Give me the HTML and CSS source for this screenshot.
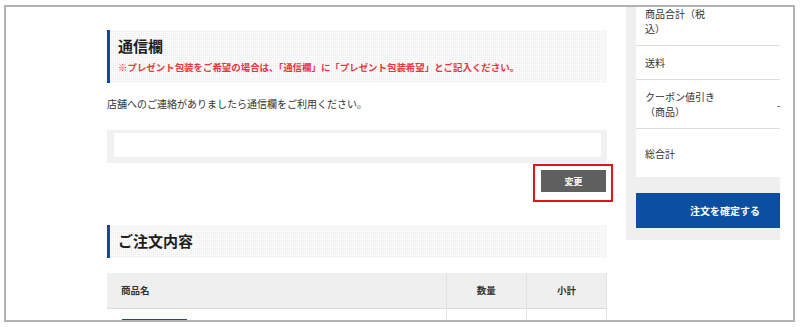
FILE: index.html
```html
<!DOCTYPE html>
<html lang="ja">
    <head>
        <meta charset="UTF-8" />
        <meta name="viewport" content="width=device-width, initial-scale=1.0" />
        <title>ご注文手続き</title>
        <link rel="stylesheet" href="styles.css">
    </head>
    <body>
        <div class="frame">
            <div class="layout">
                <main class="main">
                    <div class="section-head">
                        <h2>通信欄</h2>
                        <p class="notice">※プレゼント包装をご希望の場合は、「通信欄」に「プレゼント包装希望」とご記入ください。</p>
                    </div>
                    <p class="lead">店舗へのご連絡がありましたら通信欄をご利用ください。</p>
                    <textarea class="message" aria-label="通信欄"></textarea>
                    <div class="actions">
                        <span class="btn-wrap">
                            <button class="btn-change" type="button">変更</button>
                        </span>
                    </div>

                    <div class="section-head short">
                        <h2>ご注文内容</h2>
                    </div>
                    <table class="order-table">
                        <thead>
                            <tr>
                                <th class="col-name">商品名</th>
                                <th class="col-qty">数量</th>
                                <th class="col-sub">小計</th>
                            </tr>
                        </thead>
                        <tbody>
                            <tr>
                                <td class="col-name"><div class="item-thumb"></div></td>
                                <td class="col-qty"></td>
                                <td class="col-sub"></td>
                            </tr>
                        </tbody>
                    </table>
                </main>

                <aside class="side">
                    <div class="summary">
                        <div class="sum-row">
                            <div class="sum-label">商品合計（税込）</div>
                            <div class="sum-value"></div>
                        </div>
                        <div class="sum-row">
                            <div class="sum-label">送料</div>
                            <div class="sum-value"></div>
                        </div>
                        <div class="sum-row">
                            <div class="sum-label">クーポン値引き（商品）</div>
                            <div class="sum-value">-</div>
                        </div>
                        <div class="sum-row total">
                            <div class="sum-label">総合計</div>
                            <div class="sum-value"></div>
                        </div>
                    </div>
                    <button class="btn-confirm" type="button">注文を確定する</button>
                </aside>
            </div>
        </div>
    </body>
</html>
```

FILE: styles.css
```css
* {
    margin: 0;
    padding: 0;
    box-sizing: border-box;
}

body {
    font-family: "Noto Sans CJK JP", "Noto Sans", sans-serif;
    background: #fff;
    color: #333;
}

.frame {
    width: 791px;
    height: 317px;
    margin: 5px 0 0 4px;
    border: 2px solid #b2b2b2;
    overflow: hidden;
}

.layout {
    display: flex;
    align-items: flex-start;
    gap: 19px;
    padding-left: 101px;
}

.main {
    width: 500px;
    padding-top: 23px;
}

/* dotted heading band */
.section-head {
    border-left: 3px solid #0b4c9c;
    padding: 6px 10px 9px 8px;
    background-color: #ededed;
    background-image:
        linear-gradient(90deg, #fafafa 1px, transparent 1px),
        linear-gradient(#fafafa 1px, transparent 1px);
    background-size: 2px 2px;
}

.section-head h2 {
    font-size: 15px;
    line-height: 20px;
    font-weight: 700;
    color: #1e1e1e;
}

.section-head.short {
    margin-top: 33px;
    padding-bottom: 7px;
}

.notice {
    margin-top: 4px;
    font-size: 9.45px;
    line-height: 14px;
    font-weight: 700;
    color: #e8353c;
    white-space: nowrap;
}

.lead {
    margin-top: 14px;
    font-size: 10px;
    line-height: 14px;
    color: #333;
}

.message {
    display: block;
    width: 100%;
    height: 33px;
    margin-top: 19px;
    border-style: solid;
    border-color: #f1f1f1;
    border-width: 3px 6px 6px 7px;
    background: #fff;
    resize: none;
}

.actions {
    display: flex;
    justify-content: flex-end;
    margin-top: 7px;
    padding-right: 1px;
}

.btn-wrap {
    position: relative;
    display: block;
}

/* red annotation box */
.btn-wrap::after {
    content: "";
    position: absolute;
    top: -6px;
    right: -7px;
    bottom: -10px;
    left: -8px;
    border: 2px solid #e3141c;
}

.btn-change {
    display: block;
    width: 65px;
    height: 22px;
    border: none;
    background: #5f5f5f;
    color: #fff;
    font-family: inherit;
    font-size: 9px;
    font-weight: 700;
}

.order-table {
    width: 500px;
    margin-top: 15px;
    border-collapse: collapse;
    table-layout: fixed;
}

.order-table th {
    height: 35px;
    background: #efefef;
    border-bottom: 1px solid #dcdcdc;
    font-size: 9.5px;
    font-weight: 700;
    color: #333;
}

.order-table td {
    height: 40px;
    vertical-align: top;
}

.col-name {
    width: 339px;
    text-align: left;
    padding-left: 14px;
}

.order-table td.col-name {
    padding: 10px 0 0 15px;
}

.col-qty,
.col-sub {
    width: 80px;
    text-align: center;
    border-left: 1px solid #e2e2e2;
}

.col-sub {
    border-right: 1px solid #e2e2e2;
}

.item-thumb {
    width: 65px;
    height: 20px;
    border-top: 3px solid #0b4ea2;
}

/* order summary, clipped on the right like the capture */
.side {
    width: 154px;
    margin-top: -10px;
    padding: 0 0 12px 10px;
    background: #efefef;
    overflow: hidden;
}

.summary {
    width: 178px;
    background: #fff;
}

.sum-row {
    display: flex;
    align-items: center;
    padding: 9px 0 9px 9px;
    border-bottom: 1px solid #dcdcdc;
    font-size: 10px;
    line-height: 15px;
    color: #333;
}

.sum-row.total {
    padding: 17px 0 16px 9px;
    border-bottom: none;
}

.sum-label {
    width: 72px;
    flex-shrink: 0;
}

.sum-value {
    margin-left: 60px;
}

.btn-confirm {
    display: block;
    width: 178px;
    height: 35px;
    margin-top: 16px;
    border: none;
    background: #0b4ea2;
    color: #fff;
    font-family: inherit;
    font-size: 10px;
    font-weight: 700;
}
```
